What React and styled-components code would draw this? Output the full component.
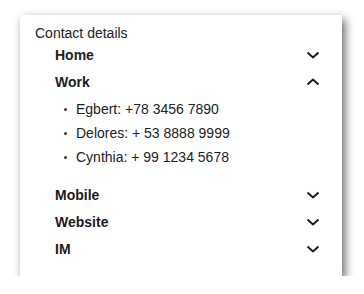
import React, { useState } from 'react';
import styled, { createGlobalStyle } from 'styled-components';

const GlobalStyle = createGlobalStyle`
  body {
    margin: 0;
    padding: 0;
    background: #ffffff;
    font-family: "Liberation Sans", Arial, sans-serif;
  }
`;

const sections = [
  { title: 'Home', items: [] },
  {
    title: 'Work',
    items: ['Egbert: +78 3456 7890', 'Delores: + 53 8888 9999', 'Cynthia: + 99 1234 5678'],
  },
  { title: 'Mobile', items: [] },
  { title: 'Website', items: [] },
  { title: 'IM', items: [] },
];

const Chevron = ({ up }) => (
  <svg width="14" height="8" viewBox="0 0 14 8" style={{ transform: up ? 'rotate(180deg)' : 'none' }}>
    <polyline points="1.5,1.5 7,6.5 12.5,1.5" fill="none" stroke="#1c1c1c" strokeWidth="2" />
  </svg>
);

const App = () => {
  const [open, setOpen] = useState('Work');

  return (
    <Page>
      <GlobalStyle />
      <Card>
        <Title>Contact details</Title>
        {sections.map((s) => (
          <Section key={s.title}>
            <Header onClick={() => setOpen(open === s.title ? null : s.title)}>
              <span>{s.title}</span>
              <Chevron up={open === s.title} />
            </Header>
            {open === s.title && s.items.length > 0 && (
              <List>
                {s.items.map((item) => (
                  <Item key={item}>{item}</Item>
                ))}
              </List>
            )}
          </Section>
        ))}
      </Card>
    </Page>
  );
};

const Page = styled.div`
  padding: 15px 0 0 20px;
`;

const Card = styled.div`
  width: 322px;
  height: 261px;
  box-sizing: border-box;
  background: #fff;
  padding: 10px 23px 0 15px;
  box-shadow: 3px 4px 9px rgba(0, 0, 0, 0.6);
`;

const Title = styled.div`
  font-size: 14px;
  line-height: 16px;
  color: #222;
`;

const Section = styled.div`
  margin-left: 20px;
`;

const Header = styled.div`
  display: flex;
  align-items: center;
  justify-content: space-between;
  height: 27px;
  font-size: 14px;
  font-weight: bold;
  color: #1c1c1c;
  cursor: pointer;

  svg {
    margin-right: -1px;
  }
`;

const List = styled.ul`
  list-style: none;
  margin: 2px 0 12px 0;
  padding: 0;
`;

const Item = styled.li`
  position: relative;
  padding-left: 21px;
  font-size: 14px;
  line-height: 24px;
  color: #222;

  &::before {
    content: '';
    position: absolute;
    left: 9px;
    top: 11px;
    width: 3px;
    height: 3px;
    border-radius: 50%;
    background: #333;
  }
`;

export default App;
